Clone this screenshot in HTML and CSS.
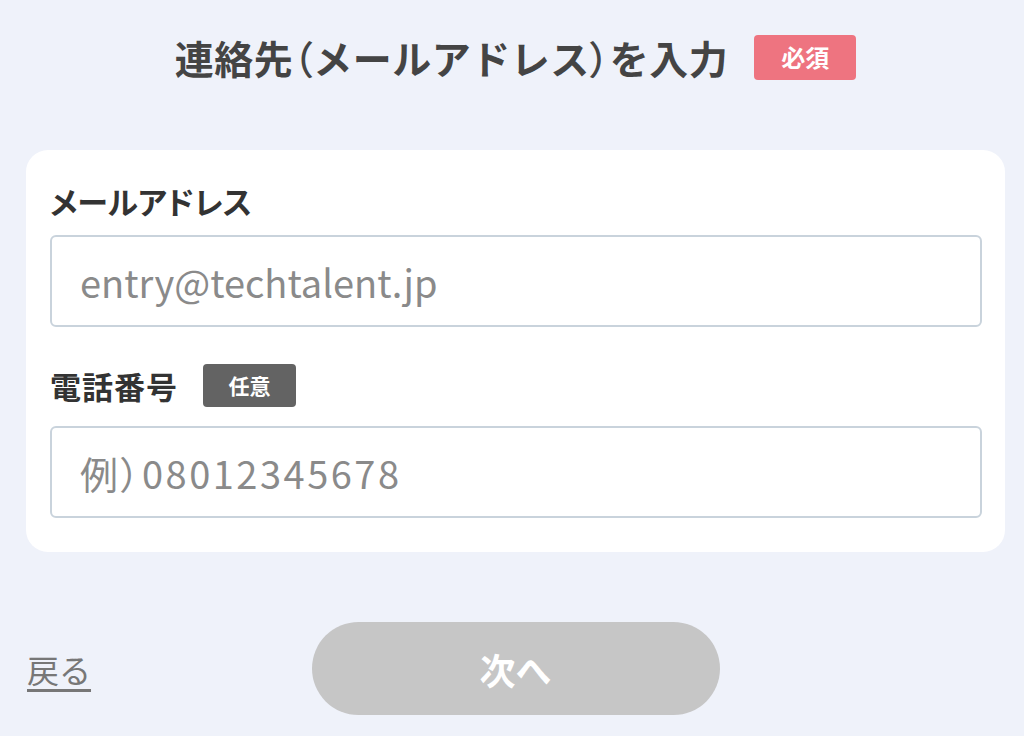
FILE: index.html
```html
<!DOCTYPE html>
<html lang="ja">
<head>
  <meta charset="UTF-8" />
  <meta name="viewport" content="width=device-width, initial-scale=1.0"/>
  <title>連絡先の入力</title>
  <link rel="stylesheet" href="styles.css">
</head>
<body>
  <div class="page">
    <h1 class="title">
      <span class="title-text">連絡先<span class="paren">（</span>メールアドレス<span class="paren">）</span>を入力</span>
      <span class="badge badge-required">必須</span>
    </h1>

    <form class="card">
      <label class="field-label" for="email">メールアドレス</label>
      <input class="field-input" id="email" type="email" placeholder="entry@techtalent.jp">

      <div class="field-label field-label-row">
        <label for="tel">電話番号</label>
        <span class="badge badge-optional">任意</span>
      </div>
      <input class="field-input field-tel" id="tel" type="tel" placeholder="例）08012345678">
    </form>

    <div class="actions">
      <a class="back" href="#">戻る</a>
      <button class="next" type="button" disabled>次へ</button>
      <span></span>
    </div>
  </div>
</body>
</html>
```

FILE: styles.css
```css
* {
  box-sizing: border-box;
}

body {
  margin: 0;
  background: #eff2fa;
  font-family: "Noto Sans CJK JP", "Noto Sans", sans-serif;
  color: #333;
}

.page {
  width: 979px;
  margin-left: 26px;
  padding-top: 33px;
}

.title {
  display: flex;
  justify-content: center;
  align-items: center;
  gap: 26px;
  margin: 0;
  height: 48px;
  font-size: 39px;
  font-weight: 700;
  color: #444;
}

.title-text {
  letter-spacing: 0.5px;
}

.paren {
  font-feature-settings: "palt";
  font-weight: 500;
}

.badge {
  display: inline-flex;
  align-items: center;
  justify-content: center;
  color: #fff;
  font-weight: 700;
  border-radius: 4px;
  line-height: 1;
}

.badge-required {
  width: 102px;
  height: 45px;
  font-size: 24px;
  background: #ee7480;
}

.badge-optional {
  width: 93px;
  height: 43px;
  font-size: 21px;
  background: #636363;
}

.card {
  margin-top: 69px;
  background: #fff;
  border-radius: 22px;
  padding: 31px 23px 34px 24px;
  display: flex;
  flex-direction: column;
}

.field-label {
  font-size: 31px;
  font-weight: 700;
  line-height: 40px;
  color: #333;
  margin-bottom: 14px;
  font-feature-settings: "palt";
}

.field-label-row {
  display: flex;
  align-items: center;
  gap: 25px;
  height: 43px;
  margin-top: 37px;
  margin-bottom: 19px;
}

.field-label-row label {
  letter-spacing: 1px;
}

.field-input {
  width: 100%;
  height: 92px;
  border: 2px solid #c9d3dc;
  border-radius: 6px;
  padding: 0 28px;
  font-family: "Noto Sans CJK JP", "Noto Sans", sans-serif;
  font-size: 38px;
  color: #333;
  background: #fff;
}

.field-tel {
  font-feature-settings: "palt";
  letter-spacing: 2.5px;
}

.field-input::placeholder {
  color: #8a8a8a;
}

.actions {
  display: grid;
  grid-template-columns: 1fr auto 1fr;
  align-items: center;
  margin-top: 70px;
}

.back {
  justify-self: start;
  margin-left: 1px;
  font-size: 32px;
  color: #777;
  text-decoration: underline;
  text-underline-offset: 6px;
}

.next {
  width: 408px;
  height: 93px;
  border: none;
  border-radius: 47px;
  background: #c6c6c6;
  color: #fff;
  font-family: "Noto Sans CJK JP", "Noto Sans", sans-serif;
  font-size: 36px;
  font-weight: 700;
}
```
